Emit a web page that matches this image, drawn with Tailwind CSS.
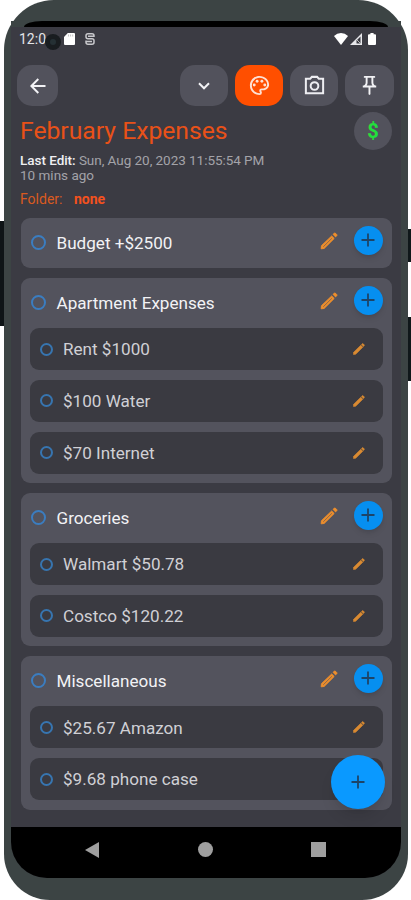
<!DOCTYPE html>
<html lang="en">
<head>
    <meta charset="UTF-8">
    <meta name="viewport" content="width=device-width, initial-scale=1.0">
    <title>February Expenses</title>
    <script src="https://cdn.jsdelivr.net/npm/@tailwindcss/browser@4"></script>
</head>
<body class="bg-white font-[Roboto,sans-serif] overflow-hidden">
    <!-- shared icons -->
    <svg class="hidden" xmlns="http://www.w3.org/2000/svg">
        <symbol id="pencil" viewBox="0 0 20 20">
            <path d="M1.300 18.700l.3-3.500L13 4.400l2.800 2.800L4.600 18.300z" fill="#ee8f2c" stroke="#ee8f2c" stroke-linejoin="round"/>
            <path d="M14.500 2.600l1.300-1.100c.5-.5 1-.5 1.500 0l1.300 1.300c.5.5.5 1 0 1.500l-1.300 1.200z" fill="#ee8f2c" stroke="#ee8f2c"/>
            <path d="M3.600 16.500l9.600-9.500" stroke="#8a664a" stroke-width="1.100" fill="none"/>
        </symbol>
        <symbol id="pencilSmall" viewBox="0 0 12 12">
            <path d="M.5 11.500l.1-2.200L7.800 2.200l2 2-7.100 7z" fill="#d98a32" stroke="#d98a32" stroke-width=".6"/>
            <path d="M8.400 1.600l.8-.8c.4-.3.7-.3 1 0l1 1c.3.3.3.6 0 1l-.8.8z" fill="#d98a32" stroke="#d98a32" stroke-width=".5"/>
        </symbol>
        <symbol id="plus" viewBox="0 0 14 14">
            <path d="M7 .5v13M.5 7h13" stroke="#1d4468" stroke-width="1.800" fill="none"/>
        </symbol>
    </svg>

    <div id="phone" class="relative w-[411px] h-[900px]">
        <!-- side buttons -->
        <div class="absolute left-0 top-[221px] w-2 h-[105px] bg-[#0e1416]"></div>
        <div class="absolute right-0 top-[229px] w-2 h-[33px] bg-[#10181a]"></div>
        <div class="absolute right-0 top-[317px] w-2 h-16 bg-[#10181a]"></div>

        <div class="relative ml-1 w-[404px] h-[900px] bg-[#3c4444] rounded-t-[50px] rounded-b-[46px] pt-[21px] px-[7px]">
            <div id="screen" class="relative w-full h-[857px] bg-[#3b3b43] rounded-b-[36px] overflow-hidden flex flex-col">
                <div class="h-1.5 shrink-0 bg-[#3c4444]">
                    <div class="h-full bg-black mx-[13px] rounded-t-[18px_6px]"></div>
                </div>

                <!-- status bar -->
                <div class="h-6 shrink-0 flex items-center pl-2 pr-[25px] text-white">
                    <span class="text-[14px] w-[26px] text-[#e4e4e8]">12:0</span>
                    <span class="w-4 h-4 mt-1.5 rounded-full bg-[#191d20] flex items-center justify-center">
                        <span class="w-1.5 h-1.5 rounded-full bg-[#253034]"></span>
                    </span>
                    <svg class="w-[11px] h-3 ml-[3px]" viewBox="0 0 11 12" fill="#fff"><path d="M3.800 0H10q1 0 1 1v10q0 1-1 1H1q-1 0-1-1V4z"/><path d="M4.500 1.500v2M6.600 1.500v2M8.700 1.500v2" stroke="#aaa" stroke-width=".7"/></svg>
                    <svg class="w-[10px] h-3 ml-[10px]" viewBox="0 0 10 12" fill="none" stroke="#c8c8cc" stroke-width="1.500"><path d="M9 4V2.800Q9 .8 7 .8H3Q1 .8 1 2.800v1q0 2 2 2h4q2 0 2 2v1.400q0 2-2 2H3q-2 0-2-2V7.500M3 3.300h6M1 8.600h6"/></svg>
                    <svg class="w-[14px] h-3 ml-auto" viewBox="0 0 14 12" fill="#fff"><path d="M7 12L0 3Q3 0 7 0t7 3z"/></svg>
                    <svg class="w-3 h-3 ml-[2px]" viewBox="0 0 12 12"><path d="M12 0v12H0z" fill="#e8e8ec"/><path d="M10.500 3.500v7H6.500V7.500z" fill="#3b3b43"/><path d="M7 7l3.500 3.500" stroke="#ddd" stroke-width=".8"/></svg>
                    <svg class="w-2 h-3 ml-[6px]" viewBox="0 0 8 12" fill="#fff"><path d="M2.400 0h3.200v1.200H7q1 0 1 1V11q0 1-1 1H1q-1 0-1-1V2.200q0-1 1-1h1.400z"/></svg>
                </div>

                <!-- toolbar -->
                <div class="mt-3.5 pl-1.5 pr-[7px] flex shrink-0 gap-[7px] h-[41px]">
                    <button class="w-[41px] h-[41px] rounded-[15px] bg-[#52525c] flex items-center justify-center mr-auto">
                        <svg class="w-4 h-4" viewBox="0 0 16 16" fill="none" stroke="#f2f2f5" stroke-width="2"><path d="M15.500 8H1.800M8.300 1L1.300 8l7 7"/></svg>
                    </button>
                    <button class="w-12 h-[41px] rounded-[15px] bg-[#52525c] flex items-center justify-center">
                        <svg class="w-3 h-2" viewBox="0 0 12 8" fill="none" stroke="#f2f2f5" stroke-width="2"><path d="M1 1.300l5 5 5-5"/></svg>
                    </button>
                    <button class="w-12 h-[41px] rounded-[15px] bg-[#ff4f00] flex items-center justify-center">
                        <svg class="w-[23px] h-[23px]" viewBox="0 0 24 24" fill="#ffe0d2"><path d="M12 22C6.490 22 2 17.510 2 12S6.490 2 12 2s10 4.040 10 9c0 3.310-2.690 6-6 6h-1.770c-.28 0-.5.22-.5.5 0 .12.05.23.13.33.41.47.64 1.060.64 1.670A2.500 2.500 0 0 1 12 22zm0-18c-4.410 0-8 3.590-8 8s3.590 8 8 8c.28 0 .5-.22.5-.5a.54.54 0 0 0-.14-.35c-.41-.46-.63-1.050-.63-1.650a2.500 2.500 0 0 1 2.500-2.500H16c2.210 0 4-1.790 4-4 0-3.860-3.590-7-8-7z"/><circle cx="6.500" cy="11.500" r="1.500"/><circle cx="9.500" cy="7.500" r="1.500"/><circle cx="14.500" cy="7.500" r="1.500"/><circle cx="17.500" cy="11.500" r="1.500"/></svg>
                    </button>
                    <button class="w-12 h-[41px] rounded-[15px] bg-[#52525c] flex items-center justify-center">
                        <svg class="w-[23px] h-[23px] -mt-px" viewBox="0 0 24 24" fill="none" stroke="#ededf1" stroke-width="2.100"><path d="M3 5h4.500L9.300 3h5.400l1.800 2H21v15H3z"/><circle cx="12" cy="12.500" r="4"/></svg>
                    </button>
                    <button class="w-[49px] h-[41px] rounded-[15px] bg-[#52525c] flex items-center justify-center">
                        <svg class="w-[23px] h-[23px]" viewBox="0 0 24 24" fill="#f2f2f5"><path d="M14 4v5c0 1.120.37 2.160 1 3H9c.65-.86 1-1.900 1-3V4h4m3-2H7a1 1 0 0 0 0 2h1v5c0 1.660-1.340 3-3 3v2h5.970v7l1 1 1-1v-7H19v-2c-1.660 0-3-1.340-3-3V4h1a1 1 0 0 0 0-2z"/></svg>
                    </button>
                </div>

                <!-- note header -->
                <div class="shrink-0 h-28 pt-[6px] pl-[9px] pr-[9px] flex justify-between items-start">
                    <div>
                        <h1 class="text-[24.700px] leading-[38px] text-[#e95118] whitespace-nowrap">February Expenses</h1>
                        <p class="mt-[3px] text-[13.500px] tracking-[-0.040px] leading-[15px] text-[#a3a3a9] whitespace-nowrap"><span class="font-medium text-[#efeff2]">Last Edit:</span> Sun, Aug 20, 2023 11:55:54 PM</p>
                        <p class="text-[13.500px] leading-[15px] text-[#a3a3a9]">10 mins ago</p>
                        <p class="mt-[8px] text-[14px] leading-4 text-[#d95a20]">Folder: <span class="ml-2 font-bold text-[#f4511e]">none</span></p>
                    </div>
                    <div class="w-[38px] h-[38px] rounded-full bg-[#52525c] flex items-center justify-center text-[#22e03c] text-[20px] font-bold">$</div>
                </div>

                <!-- expense groups -->
                <div class="pl-[9.500px] pr-[9px] flex flex-col gap-[9.600px]">
                    <section class="rounded-[9px] bg-[#53535d] shrink-0">
                        <div class="h-[50.300px] pl-2.5 pr-[9.500px] flex items-center">
                            <span class="w-[15px] h-[15px] rounded-full border-2 border-[#3b7dc0] -mt-0.5"></span>
                            <span class="ml-[11px] mt-px text-[17.100px] text-[#f2f2f5]">Budget +$2500</span>
                            <svg class="w-[18px] h-[18px] ml-auto -mt-1"><use href="#pencil"/></svg>
                            <span class="ml-4 -mt-1.5 w-[29px] h-[29px] rounded-full bg-[#068ff0] shadow-md flex items-center justify-center"><svg class="w-3.5 h-3.5"><use href="#plus"/></svg></span>
                        </div>
                    </section>

                    <section class="rounded-[9px] bg-[#53535d] shrink-0 pb-[9.500px]">
                        <div class="h-[50.300px] pl-2.5 pr-[9.500px] flex items-center">
                            <span class="w-[15px] h-[15px] rounded-full border-2 border-[#3b7dc0] -mt-0.5"></span>
                            <span class="ml-[11px] mt-px text-[17.100px] text-[#f2f2f5]">Apartment Expenses</span>
                            <svg class="w-[18px] h-[18px] ml-auto -mt-1"><use href="#pencil"/></svg>
                            <span class="ml-4 -mt-1.5 w-[29px] h-[29px] rounded-full bg-[#068ff0] shadow-md flex items-center justify-center"><svg class="w-3.5 h-3.5"><use href="#plus"/></svg></span>
                        </div>
                        <div class="px-[9.500px] flex flex-col gap-[9.800px]">
                            <div class="h-[42px] rounded-[9px] bg-[#3a3a41] pl-2.5 pr-[17.500px] flex items-center">
                                <span class="w-[13px] h-[13px] rounded-full border-2 border-[#3775b0]"></span>
                                <span class="ml-2.5 mt-px text-[17.100px] text-[#d0d0d5]">Rent $1000</span>
                                <svg class="w-3 h-3 ml-auto"><use href="#pencilSmall"/></svg>
                            </div>
                            <div class="h-[42px] rounded-[9px] bg-[#3a3a41] pl-2.5 pr-[17.500px] flex items-center">
                                <span class="w-[13px] h-[13px] rounded-full border-2 border-[#3775b0]"></span>
                                <span class="ml-2.5 mt-0.5 text-[17.100px] text-[#d0d0d5]">$100 Water</span>
                                <svg class="w-3 h-3 ml-auto"><use href="#pencilSmall"/></svg>
                            </div>
                            <div class="h-[42px] rounded-[9px] bg-[#3a3a41] pl-2.5 pr-[17.500px] flex items-center">
                                <span class="w-[13px] h-[13px] rounded-full border-2 border-[#3775b0]"></span>
                                <span class="ml-2.5 mt-0.5 text-[17.100px] text-[#d0d0d5]">$70 Internet</span>
                                <svg class="w-3 h-3 ml-auto"><use href="#pencilSmall"/></svg>
                            </div>
                        </div>
                    </section>

                    <section class="rounded-[9px] bg-[#53535d] shrink-0 pb-[9.500px]">
                        <div class="h-[50.300px] pl-2.5 pr-[9.500px] flex items-center">
                            <span class="w-[15px] h-[15px] rounded-full border-2 border-[#3b7dc0] -mt-0.5"></span>
                            <span class="ml-[11px] mt-0.5 text-[17.100px] text-[#f2f2f5]">Groceries</span>
                            <svg class="w-[18px] h-[18px] ml-auto -mt-1"><use href="#pencil"/></svg>
                            <span class="ml-4 -mt-1.5 w-[29px] h-[29px] rounded-full bg-[#068ff0] shadow-md flex items-center justify-center"><svg class="w-3.5 h-3.5"><use href="#plus"/></svg></span>
                        </div>
                        <div class="px-[9.500px] flex flex-col gap-[9.800px]">
                            <div class="h-[42px] rounded-[9px] bg-[#3a3a41] pl-2.5 pr-[17.500px] flex items-center">
                                <span class="w-[13px] h-[13px] rounded-full border-2 border-[#3775b0]"></span>
                                <span class="ml-2.5 mt-px text-[17.100px] text-[#d0d0d5]">Walmart $50.78</span>
                                <svg class="w-3 h-3 ml-auto"><use href="#pencilSmall"/></svg>
                            </div>
                            <div class="h-[42px] rounded-[9px] bg-[#3a3a41] pl-2.5 pr-[17.500px] flex items-center">
                                <span class="w-[13px] h-[13px] rounded-full border-2 border-[#3775b0]"></span>
                                <span class="ml-2.5 mt-0.5 text-[17.100px] text-[#d0d0d5]">Costco $120.22</span>
                                <svg class="w-3 h-3 ml-auto"><use href="#pencilSmall"/></svg>
                            </div>
                        </div>
                    </section>

                    <section class="rounded-[9px] bg-[#53535d] shrink-0 pb-[9.500px]">
                        <div class="h-[50.300px] pl-2.5 pr-[9.500px] flex items-center">
                            <span class="w-[15px] h-[15px] rounded-full border-2 border-[#3b7dc0] -mt-0.5"></span>
                            <span class="ml-[11px] mt-px text-[17.100px] text-[#f2f2f5]">Miscellaneous</span>
                            <svg class="w-[18px] h-[18px] ml-auto -mt-1"><use href="#pencil"/></svg>
                            <span class="ml-4 -mt-1.5 w-[29px] h-[29px] rounded-full bg-[#068ff0] shadow-md flex items-center justify-center"><svg class="w-3.5 h-3.5"><use href="#plus"/></svg></span>
                        </div>
                        <div class="px-[9.500px] flex flex-col gap-[9.800px]">
                            <div class="h-[42px] rounded-[9px] bg-[#3a3a41] pl-2.5 pr-[17.500px] flex items-center">
                                <span class="w-[13px] h-[13px] rounded-full border-2 border-[#3775b0]"></span>
                                <span class="ml-2.5 mt-0.5 text-[17.100px] text-[#d0d0d5]">$25.67 Amazon</span>
                                <svg class="w-3 h-3 ml-auto"><use href="#pencilSmall"/></svg>
                            </div>
                            <div class="h-[42px] rounded-[9px] bg-[#3a3a41] pl-2.5 pr-[17.500px] flex items-center">
                                <span class="w-[13px] h-[13px] rounded-full border-2 border-[#3775b0]"></span>
                                <span class="ml-2.5 mt-0.5 text-[17.100px] text-[#d0d0d5]">$9.68 phone case</span>
                            </div>
                        </div>
                    </section>
                </div>

                <!-- floating add button -->
                <button class="absolute right-4 bottom-[69px] w-[54px] h-[54px] rounded-full bg-[#0a99ff] shadow-lg flex items-center justify-center">
                    <svg class="w-3.5 h-3.5"><use href="#plus"/></svg>
                </button>

                <!-- android navigation -->
                <div class="mt-auto h-[51px] shrink-0 bg-black flex items-center justify-between pl-[74px] pr-[75px] pb-[6px]">
                    <svg class="w-3.5 h-4" viewBox="0 0 14 16" fill="#9f9f9f"><path d="M14 0v16L0 8z"/></svg>
                    <span class="w-[15px] h-[15px] rounded-full bg-[#9f9f9f]"></span>
                    <span class="w-[15px] h-[15px] bg-[#9f9f9f]"></span>
                </div>
            </div>
        </div>
    </div>
</body>
</html>
